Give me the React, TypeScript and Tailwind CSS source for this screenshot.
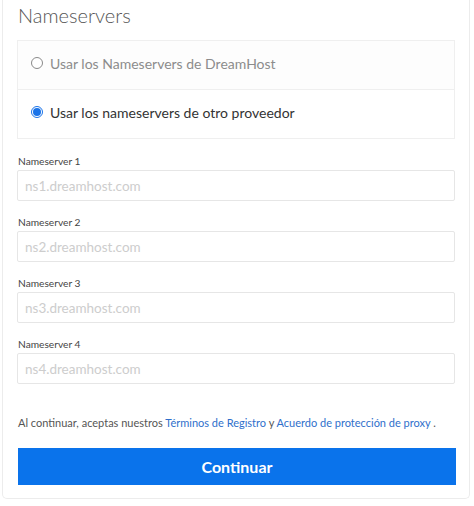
import React from "react";

const servers = ["ns1", "ns2", "ns3", "ns4"];

const Radio: React.FC<{ checked?: boolean }> = ({ checked }) =>
  checked ? (
    <span className="w-[12px] h-[12px] rounded-full border border-[#1a73e8] bg-white flex items-center justify-center shrink-0">
      <span className="w-[8px] h-[8px] rounded-full bg-[#1a73e8]" />
    </span>
  ) : (
    <span className="w-[12px] h-[12px] rounded-full border border-[#8a8a8a] bg-white shrink-0" />
  );

export default function App() {
  return (
    <div className="w-[474px] h-[506px] bg-white font-['Lato',sans-serif]">
      <div className="ml-[2px] w-[468px] border-x border-b border-[#ececec] rounded-b-[5px] px-[14px] pb-[13px]">
        <h1 className="text-[20px] leading-[28px] font-light text-[#555] pt-[1px] pl-[1px]">
          Nameservers
        </h1>
        <div className="mt-[11px] border border-[#efefef]">
          <div className="h-[49px] flex items-center gap-[7px] pl-[13px] pb-[4px] border-b border-[#efefef] bg-[#fdfdfd]">
            <Radio />
            <span className="text-[14px] text-[#8c8c8c]">
              Usar los Nameservers de DreamHost
            </span>
          </div>
          <div className="h-[48px] flex items-center gap-[7px] pl-[13px] pb-[4px]">
            <Radio checked />
            <span className="text-[14px] text-[#333]">
              Usar los nameservers de otro proveedor
            </span>
          </div>
        </div>
        <div className="mt-[15px] flex flex-col gap-[14px]">
          {servers.map((s, i) => (
            <div key={s}>
              <div className="text-[10.2px] leading-[14px] text-[#444] pl-[1px]">
                Nameserver {i + 1}
              </div>
              <input
                className="mt-[2px] w-full h-[31px] border border-[#e6e6e6] rounded-[2px] px-[7px] text-[13.5px] text-[#333] placeholder:text-[#cdcdcd] outline-none"
                placeholder={`${s}.dreamhost.com`}
              />
            </div>
          ))}
        </div>
        <p className="mt-[31px] text-[11px] leading-[16px] text-[#555] pl-[1px] whitespace-nowrap">
          Al continuar, aceptas nuestros{" "}
          <a className="text-[#2f6fcb]">Términos de Registro</a> y{" "}
          <a className="text-[#2f6fcb]">Acuerdo de protección de proxy</a> .
        </p>
        <button className="mt-[17px] w-[438px] ml-[1px] h-[37px] bg-[#0a73eb] text-white text-[16px] font-bold">
          Continuar
        </button>
      </div>
    </div>
  );
}
